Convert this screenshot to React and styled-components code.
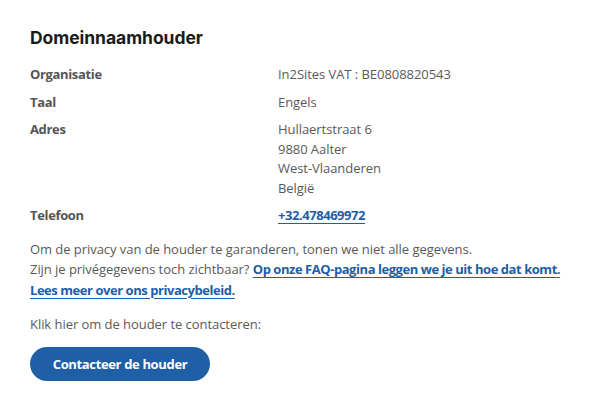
import React from "react";
import styled, { createGlobalStyle } from "styled-components";

const Global = createGlobalStyle`
  html, body { margin: 0; padding: 0; background: #fff; }
  body { font-family: "Open Sans", "Noto Sans", sans-serif; }
`;

const Card = styled.section`
  padding: 27px 10px 20px 30px;
  width: 594px;
  box-sizing: border-box;
  color: #595959;
  font-size: 13px;
  letter-spacing: -0.05px;
`;

const Title = styled.h2`
  margin: 0 0 16px 0;
  font-family: "Inter", "Noto Sans", sans-serif;
  font-weight: 700;
  font-size: 17.5px;
  line-height: 22px;
  color: #1b1b1b;
`;

const Details = styled.dl`
  display: grid;
  grid-template-columns: 248px 1fr;
  row-gap: 8px;
  margin: 0 0 13px 0;
  line-height: 19.5px;
`;

const Label = styled.dt`
  font-weight: 700;
  color: #555;
  letter-spacing: -0.35px;
`;

const Value = styled.dd`
  margin: 0;
  color: #595959;
`;

const Link = styled.a`
  color: #1d5ea8;
  font-weight: 700;
  letter-spacing: -0.45px;
  text-decoration: underline;
  text-underline-offset: 3px;
  text-decoration-thickness: 1px;
`;

const Para = styled.p`
  margin: 0 0 ${(p) => (p.$tight ? "12px" : "14px")} 0;
  line-height: 20.5px;
`;

const Button = styled.button`
  height: 34px;
  width: 180px;
  border: none;
  border-radius: 17px;
  background: #1f5fa5;
  color: #fff;
  font-family: "Open Sans", "Noto Sans", sans-serif;
  font-weight: 700;
  font-size: 13px;
  letter-spacing: -0.35px;
  cursor: pointer;
`;

export default function App() {
  return (
    <>
      <Global />
      <Card>
        <Title>Domeinnaamhouder</Title>
        <Details>
          <Label>Organisatie</Label>
          <Value>In2Sites VAT : BE0808820543</Value>
          <Label>Taal</Label>
          <Value>Engels</Value>
          <Label>Adres</Label>
          <Value>
            Hullaertstraat 6<br />
            9880 Aalter<br />
            West-Vlaanderen<br />
            België
          </Value>
          <Label>Telefoon</Label>
          <Value>
            <Link href="#">+32.478469972</Link>
          </Value>
        </Details>
        <Para>
          Om de privacy van de houder te garanderen, tonen we niet alle gegevens.
          <br />
          Zijn je privégegevens toch zichtbaar?{" "}
          <Link href="#">Op onze FAQ-pagina leggen we je uit hoe dat komt.</Link>
          <br />
          <Link href="#">Lees meer over ons privacybeleid.</Link>
        </Para>
        <Para $tight>Klik hier om de houder te contacteren:</Para>
        <Button>Contacteer de houder</Button>
      </Card>
    </>
  );
}
